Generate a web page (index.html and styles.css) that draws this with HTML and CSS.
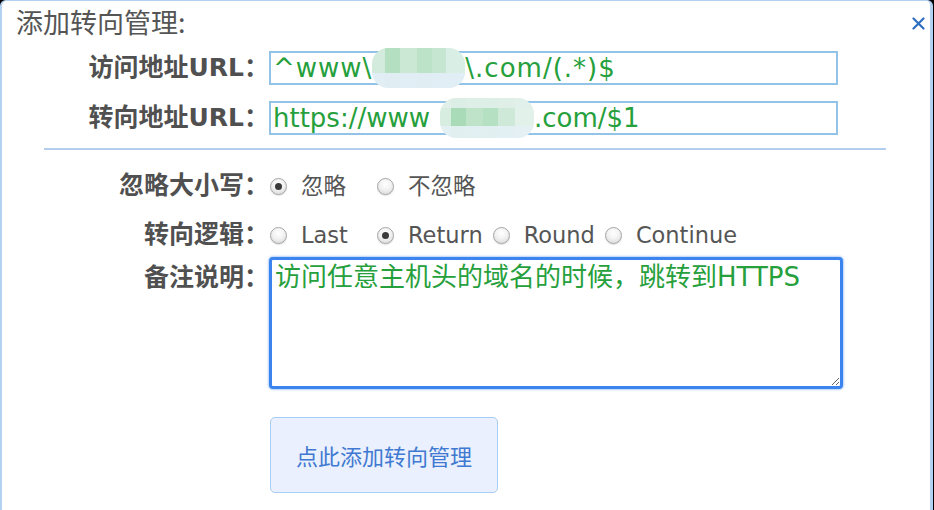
FILE: index.html
```html
<!DOCTYPE html>
<html lang="zh-CN">
<head>
<meta charset="utf-8">
<title>添加转向管理</title>
<link rel="stylesheet" href="styles.css">
</head>
<body>
<div class="dialog">
  <div class="header">
    <div class="title">添加转向管理:</div>
    <svg class="close" width="13" height="13" viewBox="0 0 13 13"><path d="M1.5 1.5 L11.5 11.5 M11.5 1.5 L1.5 11.5" stroke="#2f6ec0" stroke-width="2.2" stroke-linecap="round" fill="none"/></svg>
  </div>
  <div class="row row-url">
    <div class="label">访问地址URL：</div>
    <div class="field wide">^www\<span class="mosaic m1"></span>\.com/(.*)$</div>
  </div>
  <div class="row row-url second">
    <div class="label">转向地址URL：</div>
    <div class="field">https://www<span class="mosaic m2"></span>.com/$1</div>
  </div>
  <div class="sep"></div>
  <div class="row row-radio first">
    <div class="label">忽略大小写：</div>
    <div class="opts">
      <label class="opt"><input type="radio" name="case" checked><span>忽略</span></label>
      <label class="opt"><input type="radio" name="case"><span>不忽略</span></label>
    </div>
  </div>
  <div class="row row-radio">
    <div class="label">转向逻辑：</div>
    <div class="opts">
      <label class="opt"><input type="radio" name="logic"><span>Last</span></label>
      <label class="opt"><input type="radio" name="logic" checked><span>Return</span></label>
      <label class="opt"><input type="radio" name="logic"><span>Round</span></label>
      <label class="opt"><input type="radio" name="logic"><span>Continue</span></label>
    </div>
  </div>
  <div class="row row-note">
    <div class="label">备注说明：</div>
    <textarea class="note">访问任意主机头的域名的时候，跳转到HTTPS</textarea>
  </div>
  <div class="actions">
    <button class="btn" type="button">点此添加转向管理</button>
  </div>
</div>
</body>
</html>
```

FILE: styles.css
```css
html, body {
  margin: 0;
  padding: 0;
}
body {
  background: #000;
  font-family: "DejaVu Sans", "Noto Sans CJK SC", sans-serif;
  color: #555;
  overflow: hidden;
}
.dialog {
  box-sizing: border-box;
  width: 933px;
  height: 540px;
  background: #fff;
  border-style: solid;
  border-color: #b3d2f2;
  border-width: 1px 3px 0 2px;
  border-radius: 6px 6px 0 0;
}
.header {
  box-sizing: border-box;
  height: 50px;
  display: flex;
  justify-content: space-between;
  align-items: flex-start;
  padding: 6px 5px 0 14px;
}
.title {
  font-family: "Noto Sans CJK SC", sans-serif;
  font-size: 27px;
  line-height: 30px;
  color: #555;
}
.close {
  margin-top: 10px;
}
.row {
  display: grid;
  grid-template-columns: 267px auto;
  align-items: center;
}
.label {
  font-family: "DejaVu Sans", "Noto Sans CJK SC", sans-serif;
  font-weight: bold;
  font-size: 25px;
  line-height: 30px;
  color: #505050;
  text-align: right;
  white-space: nowrap;
}
.field {
  box-sizing: border-box;
  width: 569px;
  height: 34px;
  border: 2px solid #93c3e7;
  padding-left: 2px;
  font-size: 26px;
  line-height: 30px;
  color: #26a03c;
  white-space: nowrap;
  display: flex;
  align-items: center;
  overflow: visible;
}
.field.wide {
  letter-spacing: 1px;
}
.mosaic {
  display: inline-block;
  height: 40px;
  border-radius: 16px;
  flex: none;
}
.m1 {
  width: 93px;
  margin: 0;
  background:
    linear-gradient(to bottom, transparent 0 62%, rgba(226, 238, 246, 0.95) 62%),
    linear-gradient(90deg, #d3ebdd 0 14%, #b5dfc1 14% 30%, #cbe8d4 30% 48%, #bce2c8 48% 64%, #c6e6d1 64% 80%, #d9eee4 80%);
}
.m2 {
  width: 94px;
  margin: 0 0 0 10px;
  background:
    linear-gradient(to bottom, rgba(225, 240, 234, 0.9) 0 25%, transparent 25% 70%, rgba(228, 240, 244, 0.95) 70%),
    linear-gradient(90deg, #d7ede0 0 12%, #aadbb8 12% 28%, #bfe3c9 28% 46%, #b6e0c2 46% 62%, #cfe9d8 62% 80%, #e2f1ea 80%);
}
.second {
  margin-top: 16px;
}
.sep {
  height: 2px;
  background: #b2cdee;
  margin: 13px 44px 0 42px;
}
.row-radio {
  height: 36px;
  margin-top: 13px;
}
.row-radio.first {
  margin-top: 18px;
}
.opts {
  display: flex;
  align-items: center;
  padding-left: 1px;
}
.opt {
  display: inline-flex;
  align-items: center;
  gap: 14px;
  min-width: 97px;
  margin-right: 10px;
  font-family: "DejaVu Sans", "Noto Sans CJK SC", sans-serif;
  font-size: 22.5px;
  line-height: 30px;
  color: #555;
}
.opt input {
  appearance: none;
  -webkit-appearance: none;
  margin: 0;
  width: 17px;
  height: 17px;
  border-radius: 50%;
  border: 1px solid #a6a6a6;
  box-sizing: border-box;
  background: radial-gradient(circle at 50% 35%, #ffffff 0, #f2f2f2 45%, #d3d3d3 100%);
  box-shadow: 0 1px 1px rgba(0, 0, 0, 0.12);
  display: grid;
  place-items: center;
  flex: none;
}
.opt input:checked::after {
  content: "";
  width: 7px;
  height: 7px;
  border-radius: 50%;
  background: #3a3a3a;
}
.row-note {
  align-items: start;
  margin-top: 4px;
}
.row-note .label {
  padding-top: 6px;
}
.note {
  box-sizing: border-box;
  width: 574px;
  height: 132px;
  margin: 0;
  border: 3px solid #3c84ee;
  border-radius: 4px;
  box-shadow: 0 0 2px 1px rgba(90, 150, 240, 0.45);
  outline: none;
  padding: 1px 3px;
  font-family: "DejaVu Sans", "Noto Sans CJK SC", sans-serif;
  font-size: 26px;
  line-height: 32px;
  color: #26a03c;
  resize: both;
  background: #fff;
}
.actions {
  padding-left: 268px;
  margin-top: 28px;
}
.btn {
  box-sizing: border-box;
  width: 228px;
  height: 76px;
  border: 1px solid #a8cdf6;
  border-radius: 5px;
  background: #eaf0fd;
  color: #3f79d1;
  font-family: "Noto Sans CJK SC", sans-serif;
  font-size: 22px;
  line-height: 30px;
  padding: 0;
}
```
